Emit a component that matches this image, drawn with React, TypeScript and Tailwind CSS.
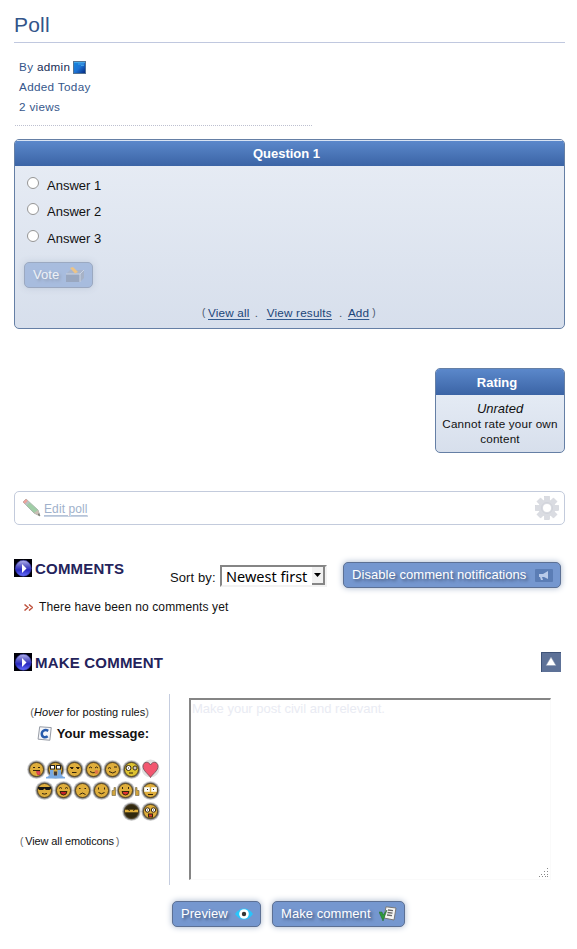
import type { ReactNode } from "react";

const btn =
  "flex items-center justify-between rounded-[5px] border border-[#5c7094] bg-[#7597cf] pl-2 text-[13px] tracking-[0.06px] text-white shadow-[0_0_6px_#a5b4cb] [text-shadow:2px_2px_3px_#435577]";

function PlayIcon() {
  return (
    <svg width="18" height="18" viewBox="0 0 18 18" className="shrink-0">
      <defs>
        <linearGradient id="orb" x2="0" y2="1">
          <stop offset="0" stopColor="#b4b4ec" />
          <stop offset=".4" stopColor="#5252c4" />
          <stop offset=".6" stopColor="#2828c0" />
          <stop offset="1" stopColor="#6a74ff" />
        </linearGradient>
      </defs>
      <rect width="18" height="18" fill="#000008" />
      <circle cx="9.3" cy="9.3" r="8" fill="url(#orb)" stroke="#3434a8" strokeWidth=".6" />
      <path d="M8 5 12.500 9.500 8 14z" fill="#fff" />
    </svg>
  );
}

function Gear() {
  return (
    <svg width="24" height="24" viewBox="0 0 24 24">
      <g fill="#dadce2" stroke="#cdd0d7" strokeWidth=".5">
        {[0, 45, 90, 135, 180, 225, 270, 315].map((a) => (
          <rect key={a} x="9.4" y=".3" width="5.2" height="6.5" transform={`rotate(${a} 12 12)`} />
        ))}
      </g>
      <circle cx="12" cy="12" r="6.3" fill="#fff" stroke="#dadce2" strokeWidth="4.6" />
      <circle cx="12" cy="12" r="5.5" fill="none" stroke="#ced1d8" strokeWidth=".8" />
    </svg>
  );
}

function Halo() {
  return (
    <g fill="#444">
      <circle cx="9.500" cy="10" r="9.400" opacity=".2" />
      <circle cx="9.500" cy="10" r="8.800" opacity=".3" />
      <circle cx="9.500" cy="10" r="8.100" opacity=".5" />
    </g>
  );
}

function Face({ children, wide, fill = "#dfae3c" }: { children?: ReactNode; wide?: boolean; fill?: string }) {
  return (
    <svg width={wide ? 30 : 19} height="21" viewBox={wide ? "-5 -.5 30 21" : "0 -.5 19 21"}>
      <Halo />
      {wide && (
        <g fill="#d1a43c" stroke="#7d704f" strokeWidth=".7">
          <path d="M-4 10h2V7h1.500v8h-3.500z" />
          <path d="M23 10h-2V7h-1.500v8H23z" />
        </g>
      )}
      <circle cx="9.500" cy="10" r="7" fill={fill} stroke="#4a3a1b" strokeWidth=".9" />
      <g fill="none" stroke="#33240b" strokeWidth="1">
        {children}
      </g>
    </svg>
  );
}

function Emoticons() {
  return (
    <div className="flex h-[63px] flex-col items-end">
      <div className="flex h-[21px]">
        <Face>
          <path d="M6 8h2M11 8h2M6 11h7" />
          <path d="M9.500 12h3.500v3h-2.500z" fill="#e5485a" stroke="#c93448" strokeWidth=".8" />
        </Face>
        <svg width="19" height="21" viewBox="0 -.5 19 21">
          <Halo />
          <circle cx="9.500" cy="10" r="7" fill="#d7a93c" stroke="#4a3a1b" />
          <rect x="4.500" y="6" width="4" height="3.500" fill="#fff" stroke="#222" />
          <rect x="10.500" y="6" width="4" height="3.500" fill="#fff" stroke="#222" />
          <path d="M4 10.500h3.500V15h4v-4.500H15V15l2 2 2 .5v1.500H0v-1.500l2-.5L4 15z" fill="#7aaae2" />
          <path d="M8 12h3v4H8z" fill="#453b37" />
        </svg>
        <Face><path d="M5 8h3.500M11 8h3.500M6 9h2M12 9h2M7 13h4.500" /></Face>
        <Face>
          <path d="M5 8.500q1.500-2 3 0M11 8.500q1.500-2 3 0M6 12q3 2 5 1" />
          <circle cx="12.500" cy="12.500" r="2" fill="#df7547" stroke="none" />
        </Face>
        <Face><path d="M5 9q1.500-2 3 0M11 7.500h3M6 12q4 3 7 0" /></Face>
        <Face fill="#dec331">
          <circle cx="6.500" cy="8.500" r="2.500" fill="#fff" />
          <circle cx="13" cy="8.500" r="2" fill="#fff" />
          <path d="M6.500 8v1M13 8v1M7 13.500h4" />
        </Face>
        <svg width="19" height="21" viewBox="0 -.5 19 21">
          <circle cx="9.500" cy="9" r="9" fill="#555" opacity=".18" />
          <path d="M9.500 18C8 15 1.500 11 2 6.500c.5-4.500 5.500-5 7.500-1 2-4 7-3.500 7.500 1C17.500 11 11 15 9.500 18z" fill="#f2566f" stroke="#79545b" strokeWidth=".9" />
        </svg>
      </div>
      <div className="flex h-[21px]">
        <Face>
          <path d="M3 6.500h13V8l-1.500 1.500H11L9.500 8 8 9.500H4.500L3 8z" fill="#151515" stroke="none" />
          <path d="M7 13q2.500 1.200 5 0" />
        </Face>
        <Face>
          <path d="M5 8 6.500 7 8 8M11 8 12.500 7 14 8" />
          <path d="M6 11h7q-.5 3.500-3.500 3.500T6 11z" fill="#c6222a" />
        </Face>
        <Face><path d="M6 8h1.500M11.500 8H13M6.500 14q3-3 6 0" /></Face>
        <Face><path d="M6.500 7v2M12.500 7v2M6.500 12q3 2.500 6 0" /></Face>
        <Face wide>
          <path d="M6.500 6.500v2M12.500 6.500v2" />
          <path d="M6 11h7q-.5 3.500-3.500 3.500T6 11z" fill="#e33131" />
        </Face>
        <Face>
          <path d="M3.500 7h5v4h-5zM10.500 7h5v4h-5z" fill="#fff" stroke="#efe9cf" />
          <path d="M6 9h1M12 9h1M7 14h5" />
        </Face>
      </div>
      <div className="flex h-[21px]">
        <Face fill="#30280f">
          <path d="M3 9.500h13" stroke="#dfae3c" strokeWidth="2.600" />
          <path d="M6 8l2 1M13 8l-2 1" />
        </Face>
        <Face>
          <circle cx="6.500" cy="8.500" r="2.200" fill="#fff" />
          <circle cx="12.500" cy="8.500" r="2.200" fill="#fff" />
          <path d="M6.500 8v1M12.500 8v1" />
          <rect x="7.500" y="12.500" width="4" height="3" fill="#df3b32" />
        </Face>
      </div>
    </div>
  );
}

function Link({ children }: { children: ReactNode }) {
  return <span className="h-[14px] border-b border-[#6c90ba] leading-[14px] text-[#204578] underline decoration-[#315b91] decoration-1 underline-offset-[2px]">{children}</span>;
}

export default function App() {
  return (
    <div className="h-[949px] w-[577px] overflow-hidden bg-white pl-[14px] pr-3 font-['Liberation_Sans',sans-serif] text-[#111]">
      <h1 className="h-[43px] border-b border-[#c0c8df] pt-[11px] text-[21px] leading-7 tracking-[0.2px] text-[#33558a]">Poll</h1>

      <div className="ml-px mt-[14px] h-[69px] w-[297px] border-b border-dotted border-[#bdc0d0] pl-1 text-[11.7px] leading-5 tracking-[0.33px] text-[#36578b]">
        <div className="flex items-center whitespace-pre">
          By <span className="text-[#172b54]">admin</span>
          <svg width="13" height="13" className="ml-[3px] mt-px">
            <defs>
              <linearGradient id="avatar" x2="1" y2="1"><stop stopColor="#1689df" /><stop offset=".5" stopColor="#1d73d4" /><stop offset="1" stopColor="#02237b" /></linearGradient>
            </defs>
            <rect x=".5" y=".5" width="12" height="12" fill="url(#avatar)" stroke="#557392" />
            <path d="M1 1.500h11M5 3h6M8 4.500h3" stroke="#5cc0f2" opacity=".6" />
          </svg>
        </div>
        <div>Added Today</div>
        <div>2 views</div>
      </div>

      <section className="mt-[13px] h-[190px] overflow-hidden rounded-[5px] border border-[#657fa5] bg-gradient-to-b from-[#e8edf5] to-[#d7dfec]">
        <h2 className="h-[26px] border-t border-[#d8e3f3] bg-gradient-to-b from-[#5b88cb] to-[#3b64a5] pr-[6px] text-center text-[13px] font-bold leading-[26px] text-white">Question 1</h2>
        <div className="flex flex-col pt-[8px]">
          {["Answer 1", "Answer 2", "Answer 3"].map((a, i) => (
            <label key={a} className={`flex items-start pl-3 text-[13px] ${i === 1 ? "h-[27px]" : "h-[26px]"}`}>
              <span className="mt-[3px] h-3 w-3 rounded-full border border-[#959595] bg-white" />
              <span className="ml-2 mt-[3px] leading-[18px]">{a}</span>
            </label>
          ))}
        </div>
        <div className={`${btn} ml-[9px] mt-[9px] h-[26px] w-[69px] pr-[7px] opacity-50`}>
          Vote
          <svg width="20" height="18" viewBox="0 0 20 18">
            <path d="M1 8 5 4h14l-4 4z" fill="#7589ae" />
            <path d="M1 8h14v8H1z" fill="#596d92" />
            <path d="M15 8l4-4v8l-4 4z" fill="#73839f" />
            <path d="M1 8h14v8M15 8l4-4" stroke="#bac7dd" fill="none" />
            <path d="M5 2 8 1 13 6l-3 1.500z" fill="#ffa51d" />
          </svg>
        </div>
        <div className="mt-[18px] flex h-4 whitespace-pre pl-[187px] text-[11.7px] leading-[14px] tracking-[0.2px] text-[#49566a]">
          <span className="w-[6px] text-[10px]">(</span>
          <Link>View all</Link>
          <span className="w-[17px] pl-[5px]">.</span>
          <Link>View results</Link>
          <span className="w-[16px] pl-[7px]">.</span>
          <Link>Add</Link>
          <span className="pl-[3px] text-[10px]">)</span>
        </div>
      </section>

      <section className="ml-auto mt-[39px] h-[85px] w-[130px] overflow-hidden rounded-[5px] border border-[#657fa5] bg-gradient-to-b from-[#eaf0f8] to-[#d7dfec] text-center">
        <h2 className="h-[26px] bg-gradient-to-b from-[#5b88cb] to-[#3b64a5] pr-[6px] text-[13px] font-bold leading-[28px] text-white">Rating</h2>
        <div className="mt-[6px] h-[15px] text-[13px] italic leading-[15px]">Unrated</div>
        <div className="whitespace-nowrap text-[11.7px] leading-[15px] tracking-[0.18px]">Cannot rate your own<br />content</div>
      </section>

      <section className="mt-[38px] flex h-[34px] items-center rounded-[5px] border border-[#c3cbdc] pl-[7px] pr-[5px] text-[12px]">
        <svg width="20" height="20" viewBox="0 0 20 20">
          <path d="M1 4 4 1 16 12 18 18 12 15z" fill="#9fcea6" stroke="#aab8ad" />
          <path d="M1 4 4 1 6 3 3 6z" fill="#eea29e" />
          <path d="M3 6 6 3 7.500 4.500 4.500 7.500z" fill="#bbc1c5" />
          <path d="M12 15 16 12 18 18z" fill="#c9bdb3" />
          <path d="M16 17l2 1-1-3z" fill="#666" />
        </svg>
        <span className="ml-[2px] mt-[2px] h-[15px] border-b border-[#c7d2e2] leading-[15px] tracking-[0.1px] text-[#a0b1cb] underline decoration-[#b5c3d8] decoration-1 underline-offset-[2px]">Edit poll</span>
        <span className="ml-auto"><Gear /></span>
      </section>

      <div className="mt-[34px] flex h-[30px] items-start">
        <PlayIcon />
        <h2 className="ml-[3px] w-[135px] text-[15px] font-bold leading-5 tracking-[0.2px] text-[#24235b]">COMMENTS</h2>
        <span className="mt-[10px] w-[50px] whitespace-nowrap text-[13px] leading-[18px] tracking-[0.1px]">Sort by:</span>
        <div className="mt-[6px] flex h-[22px] w-[107px] items-center justify-between border-2 border-b-[#f2f2f2] border-l-[#858585] border-r-[#f2f2f2] border-t-[#858585] pl-1 font-['Noto_Sans',sans-serif] text-[14.5px] leading-5 text-black">
          Newest first
          <span className="flex h-[18px] w-[13px] items-center justify-center border-b-2 border-r-2 border-[#858585] bg-[#f1f1f1]">
            <svg width="7" height="4"><path d="M0 0h7L3.500 4z" /></svg>
          </span>
        </div>
        <div className={`${btn} ml-4 mt-[3px] h-[26px] w-[218px] whitespace-nowrap pr-[7px]`}>
          Disable comment notifications
          <svg width="18" height="13" viewBox="0 0 18 13">
            <rect width="18" height="13" rx="1" fill="#5b7db5" />
            <path d="M4 5h4l5-3v8L9 8H7l1 3H6L5 8H4z" fill="#b9cbea" />
          </svg>
        </div>
      </div>
      <div className="mt-[9px] flex h-[18px] items-center pl-[10px] text-[12px] tracking-[0.13px]">
        <svg width="9" height="7" viewBox="0 0 9 7"><path d="M.5.5 4 3.500.5 6.500M5 .5 8.500 3.500 5 6.500" fill="none" stroke="#bf5440" strokeWidth="1.500" /></svg>
        <span className="ml-[6px]">There have been no comments yet</span>
      </div>

      <div className="mt-[36px] flex h-5 items-start">
        <span className="mt-px"><PlayIcon /></span>
        <h2 className="ml-[3px] text-[15px] font-bold leading-[22px] tracking-[0.2px] text-[#24235b]">MAKE COMMENT</h2>
        <svg width="20" height="20" className="ml-auto mr-1">
          <rect width="20" height="20" fill="#5d7197" />
          <path d="M.5 20V.5H20" fill="none" stroke="#3e5277" />
          <path d="M5 13.500 10 5 15 13.500z" fill="#fff" stroke="#8493ad" strokeWidth=".5" />
        </svg>
      </div>

      <div className="mt-[22px] flex h-[191px]">
        <div className="w-[156px] border-r border-[#c5cddf] pt-[11px]">
          <div className="mr-[20px] text-right text-[11px] leading-[15px] tracking-[0.03px]"><span className="text-[#666]">(</span><i>Hover</i> for posting rules<span className="text-[#666]">)</span></div>
          <div className="mr-5 mt-[5px] flex h-[17px] items-center justify-end text-[13px] font-bold">
            <svg width="15" height="15" viewBox="0 0 14 14" className="mr-[5px]">
              <path d="M2.500 .7 13.300 1.500 12 13.300 1 12.300z" fill="#f6f7fa" stroke="#858b96" strokeWidth=".8" />
              <path d="M10.500 4.500C7 2.500 4 5 4.500 8s3.500 3 5.500 1.500" fill="none" stroke="#285cac" strokeWidth="2.300" />
            </svg>
            Your message:
          </div>
          <div className="mr-[9px] mt-[17px]"><Emoticons /></div>
          <div className="ml-[6px] mt-[12px] whitespace-nowrap text-[11px] leading-[15px] tracking-[-0.12px]"><span className="mr-[2px] text-[10px] text-[#666]">(</span>View all emoticons<span className="ml-[2px] text-[10px] text-[#666]">)</span></div>
        </div>
        <div className="ml-[19px] mt-1 flex h-[182px] w-[362px] border-2 border-b border-r border-b-[#fafafa] border-l-[#858585] border-r-[#fafafa] border-t-[#858585] pl-px pt-px text-[13px] leading-[16px] text-[#e9ebf3]">
          <span className="whitespace-nowrap">Make your post civil and relevant.</span>
          <svg width="10" height="10" className="mb-px ml-auto mr-px self-end">
            <path d="M8 .5h1M5 3.500h1M8 3.500h1M2 6.500h1M5 6.500h1M8 6.500h1M0 8.500h1M3 8.500h1M6 8.500h1M8 8.500h1" stroke="#888" />
          </svg>
        </div>
      </div>

      <div className="mt-4 flex gap-[11px] pl-[158px]">
        <div className={`${btn} h-[26px] w-[89px] pr-[7px]`}>
          Preview
          <svg width="18" height="12" viewBox="0 0 18 12">
            <path d="M0 6Q4 .5 9 .5T18 6Q14 11.500 9 11.500T0 6z" fill="#28c5fb" />
            <circle cx="9" cy="6" r="4.800" fill="#fff" />
            <circle cx="9" cy="6" r="2.200" fill="#343434" />
          </svg>
        </div>
        <div className={`${btn} h-[26px] w-[133px] pr-[7px]`}>
          Make comment
          <svg width="18" height="16" viewBox="0 0 18 16">
            <path d="M7 .8 17 2 15 14 5 12z" fill="#f6f6f4" stroke="#777" />
            <path d="M9 4l5 .7M8.500 6.500l5 .7M8 9l5 .7" stroke="#666" strokeWidth="1.300" />
            <path d="M0 6h3l1 3 4-5-4 11z" fill="#2c9a3b" stroke="#24652d" strokeWidth=".5" />
          </svg>
        </div>
      </div>
    </div>
  );
}
